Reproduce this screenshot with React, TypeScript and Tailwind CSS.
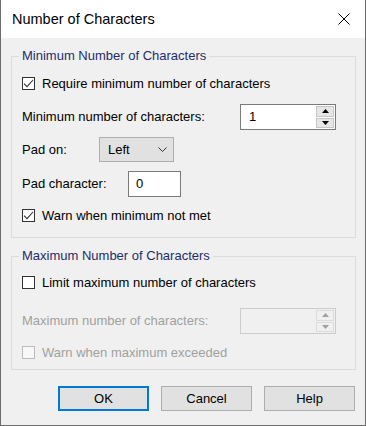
import React from "react";

const font = { fontFamily: '"Liberation Sans", Arial, sans-serif' };

function CheckBox({ checked, disabled, label }: { checked?: boolean; disabled?: boolean; label: string }) {
  return (
    <div className="flex h-[17px] items-center">
      <span
        className={
          "flex h-[13px] w-[13px] items-center justify-center border " +
          (disabled ? "border-[#bcbcbc] bg-[#f7f7f7]" : "border-[#333333] bg-white")
        }
      >
        {checked && (
          <svg width="11" height="11" viewBox="0 0 11 11">
            <path d="M1 5.6 L4 8.6 L10 2" fill="none" stroke="#333" strokeWidth="1.1" />
          </svg>
        )}
      </span>
      <span className={"ml-[7px] " + (disabled ? "text-[#a0a0a0]" : "text-black")}>{label}</span>
    </div>
  );
}

function Arrow({ up, disabled }: { up?: boolean; disabled?: boolean }) {
  return (
    <svg width="7" height="4" viewBox="0 0 7 4">
      <path d={up ? "M0 4 L3.5 0 L7 4 Z" : "M0 0 L3.5 4 L7 0 Z"} fill={disabled ? "#a0a0a0" : "#000"} />
    </svg>
  );
}

function SpinBox({ value, disabled }: { value: string; disabled?: boolean }) {
  return (
    <div
      className={
        "flex h-[26px] w-[96px] border p-[1px] " +
        (disabled ? "border-[#cccccc] bg-[#f0f0f0]" : "border-[#7a7a7a] bg-white")
      }
    >
      <div className="flex flex-1 items-center pl-[7px] text-black">{value}</div>
      <div className="flex w-[18px] flex-col gap-[1px]">
        <div
          className={
            "flex flex-1 items-center justify-center border " +
            (disabled ? "border-[#dcdcdc] bg-[#f0f0f0]" : "border-[#c6c6c6] bg-[#e6e6e6]")
          }
        >
          <Arrow up disabled={disabled} />
        </div>
        <div
          className={
            "flex flex-1 items-center justify-center border " +
            (disabled ? "border-[#dcdcdc] bg-[#f0f0f0]" : "border-[#c6c6c6] bg-[#e6e6e6]")
          }
        >
          <Arrow disabled={disabled} />
        </div>
      </div>
    </div>
  );
}

function Button({ label, primary }: { label: string; primary?: boolean }) {
  return (
    <button
      type="button"
      className={
        "flex h-[25px] w-[91px] items-center justify-center bg-[#e1e1e1] text-black " +
        (primary ? "border-2 border-[#0078d7]" : "border border-[#adadad]")
      }
    >
      {label}
    </button>
  );
}

export default function App() {
  return (
    <div
      className="flex h-[426px] w-[366px] flex-col border-x border-b border-[#6b6b6b] bg-[#f0f0f0] text-[13px] leading-4"
      style={font}
    >
      <div className="flex h-[38px] items-center justify-between bg-white pl-[11px] pr-[15px]">
        <span className="text-[14.5px] text-black">Number of Characters</span>
        <svg width="12" height="12" viewBox="0 0 12 12">
          <path d="M0.5 0.5 L11.5 11.5 M11.5 0.5 L0.5 11.5" stroke="#000" strokeWidth="1" />
        </svg>
      </div>

      <div className="flex flex-1 flex-col pl-[10px] pr-[9px] pt-[10px]">
        <fieldset className="border border-[#dcdcdc] px-[10px] pb-[13px]">
          <legend className="-ml-[3px] px-[3px] leading-4 text-[#1e2d6e]">Minimum Number of Characters</legend>
          <div className="mt-[11px]">
            <CheckBox checked label="Require minimum number of characters" />
          </div>
          <div className="mt-[12px] flex items-center">
            <span className="w-[218px]">Minimum number of characters:</span>
            <SpinBox value="1" />
          </div>
          <div className="mt-[7px] flex items-center">
            <span className="w-[77px]">Pad on:</span>
            <div className="flex h-[25px] w-[75px] items-center justify-between border border-[#adadad] bg-[#e1e1e1] pl-[8px] pr-[6px]">
              <span>Left</span>
              <svg width="9" height="5" viewBox="0 0 9 5">
                <path d="M0.5 0.5 L4.5 4.5 L8.5 0.5" fill="none" stroke="#333" strokeWidth="1" />
              </svg>
            </div>
          </div>
          <div className="mt-[9px] flex items-center">
            <span className="w-[106px]">Pad character:</span>
            <div className="flex h-[26px] w-[53px] items-center border border-[#7a7a7a] bg-white pl-[7px]">0</div>
          </div>
          <div className="mt-[10px]">
            <CheckBox checked label="Warn when minimum not met" />
          </div>
        </fieldset>

        <fieldset className="mt-[10px] border border-[#dcdcdc] px-[10px] pb-[8px]">
          <legend className="-ml-[3px] px-[3px] leading-4 text-[#1e2d6e]">Maximum Number of Characters</legend>
          <div className="mt-[10px]">
            <CheckBox label="Limit maximum number of characters" />
          </div>
          <div className="mt-[17px] flex items-center">
            <span className="w-[218px] text-[#a0a0a0]">Maximum number of characters:</span>
            <SpinBox value="" disabled />
          </div>
          <div className="mt-[10px]">
            <CheckBox disabled label="Warn when maximum exceeded" />
          </div>
        </fieldset>

        <div className="mt-[16px] flex justify-end gap-[12px] pr-[1px]">
          <Button primary label="OK" />
          <Button label="Cancel" />
          <Button label="Help" />
        </div>
      </div>
    </div>
  );
}
